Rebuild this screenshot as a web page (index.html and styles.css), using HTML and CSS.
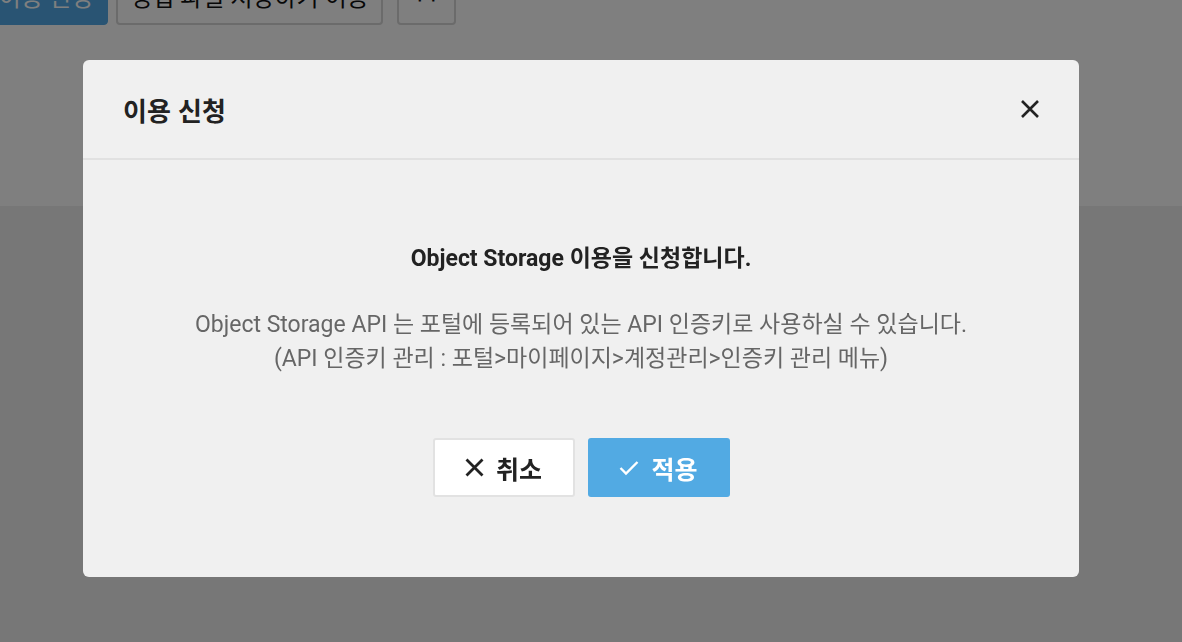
FILE: index.html
```html
<!DOCTYPE html>
<html lang="ko">
<head>
<meta charset="utf-8">
<title>이용 신청</title>
<link rel="stylesheet" href="styles.css">
</head>
<body>
<div class="page">
  <div class="toolbar">
    <button class="tb-btn tb-primary">이용 신청</button>
    <button class="tb-btn tb-default">영업 파일 저장하기 이용</button>
    <button class="tb-btn tb-small">++</button>
  </div>
  <div class="content"></div>
</div>
<div class="overlay"></div>
<div class="modal" role="dialog">
  <div class="modal-header">
    <h2 class="modal-title">이용 신청</h2>
    <button class="modal-close" aria-label="닫기">
      <svg width="20" height="20" viewBox="0 0 20 20"><path d="M2 2L18 18M18 2L2 18" stroke="#222" stroke-width="2.6" fill="none"/></svg>
    </button>
  </div>
  <div class="modal-body">
    <p class="lead">Object Storage 이용을 신청합니다.</p>
    <p class="desc">Object Storage API 는 포털에 등록되어 있는 API 인증키로 사용하실 수 있습니다.<br>(API 인증키 관리 : 포털&gt;마이페이지&gt;계정관리&gt;인증키 관리 메뉴)</p>
    <div class="actions">
      <button class="btn btn-cancel">
        <svg width="19" height="19" viewBox="0 0 19 19"><path d="M1.5 1.5L17.5 17.5M17.5 1.5L1.5 17.5" stroke="#222" stroke-width="2.8" fill="none"/></svg>
        <span>취소</span>
      </button>
      <button class="btn btn-apply">
        <svg width="20" height="16" viewBox="0 0 20 16"><path d="M1.5 8L7 13.5L18.5 2" stroke="#fff" stroke-width="2.4" fill="none"/></svg>
        <span>적용</span>
      </button>
    </div>
  </div>
</div>
</body>
</html>
```
FILE: styles.css
```css
* { box-sizing: border-box; }
html, body { margin: 0; padding: 0; height: 100%; }
body {
  font-family: Roboto, "Noto Sans CJK KR", sans-serif;
  background: #eeeeee;
  overflow: hidden;
}
.page { height: 100%; display: flex; flex-direction: column; }
.toolbar {
  background: #ffffff;
  height: 206px;
  display: flex;
  align-items: flex-start;
  gap: 8px;
}
.tb-btn {
  margin-top: -35px;
  height: 60px;
  font-family: Roboto, "Noto Sans CJK KR", sans-serif;
  font-size: 24px;
  border-radius: 4px;
  padding: 0 10px;
  white-space: nowrap;
  overflow: hidden;
}
.tb-primary {
  background: #52a9e6;
  color: #fff;
  border: 1px solid #52a9e6;
  width: 124px;
  margin-left: -16px;
}
.tb-default {
  background: #fff;
  border: 2px solid #d6d6d6;
  color: #111;
  width: 267px;
}
.tb-small {
  background: #fff;
  border: 2px solid #d6d6d6;
  color: #111;
  width: 59px;
  margin-left: 6px;
}
.content { flex: 1; background: #eeeeee; }
.overlay {
  position: fixed;
  inset: 0;
  background: rgba(0, 0, 0, 0.5);
}
.modal {
  position: fixed;
  left: 83px;
  top: 60px;
  width: 996px;
  height: 517px;
  background: #f0f0f0;
  border-radius: 6px;
  display: flex;
  flex-direction: column;
}
.modal-header {
  height: 100px;
  border-bottom: 2px solid #e1e1e1;
  display: flex;
  align-items: center;
  justify-content: space-between;
  padding: 0 40px 0 40px;
}
.modal-title {
  margin: 0;
  font-family: "Noto Sans CJK KR", sans-serif;
  font-size: 26px;
  font-weight: 700;
  color: #222;
}
.modal-close {
  background: none;
  border: 0;
  padding: 0;
  width: 20px;
  height: 20px;
  display: flex;
  margin-right: -1px;
}
.modal-body {
  flex: 1;
  display: flex;
  flex-direction: column;
  align-items: center;
  padding-top: 83px;
}
.lead {
  margin: 0;
  font-size: 23px;
  font-weight: 700;
  color: #222;
  line-height: 32px;
}
.desc {
  margin: 33px 0 0;
  font-size: 23px;
  color: #666;
  line-height: 34px;
  text-align: center;
}
.actions {
  margin-top: 62px;
  display: flex;
  gap: 13px;
}
.btn {
  width: 142px;
  height: 59px;
  border-radius: 3px;
  display: flex;
  align-items: center;
  justify-content: center;
  gap: 12px;
  font-family: "Noto Sans CJK KR", sans-serif;
  font-size: 25px;
  font-weight: 700;
}
.btn-cancel {
  background: #fff;
  border: 2px solid #e2e2e2;
  color: #222;
}
.btn-apply {
  background: #52aae3;
  border: 0;
  color: #fff;
}
```
